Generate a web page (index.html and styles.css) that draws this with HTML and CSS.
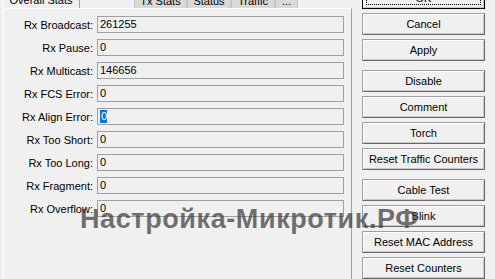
FILE: index.html
```html
<!DOCTYPE html>
<html>
<head>
<meta charset="utf-8">
<link rel="stylesheet" href="styles.css">
</head>
<body>
<div class="win">
  <div class="left">
    <div class="tabs">
      <div class="tab sel">Overall Stats</div>
      <div class="tab-gap"></div>
      <div class="tab w53">Tx Stats</div>
      <div class="tab w44">Status</div>
      <div class="tab w44">Traffic</div>
      <div class="tab w23">...</div>
    </div>
    <div class="panel">
      <div class="row"><span class="lbl">Rx Broadcast:</span><span class="fld">261255</span></div>
      <div class="row"><span class="lbl">Rx Pause:</span><span class="fld">0</span></div>
      <div class="row"><span class="lbl">Rx Multicast:</span><span class="fld">146656</span></div>
      <div class="row"><span class="lbl">Rx FCS Error:</span><span class="fld">0</span></div>
      <div class="row"><span class="lbl">Rx Align Error:</span><span class="fld"><span class="selected">0</span></span></div>
      <div class="row"><span class="lbl">Rx Too Short:</span><span class="fld">0</span></div>
      <div class="row"><span class="lbl">Rx Too Long:</span><span class="fld">0</span></div>
      <div class="row"><span class="lbl">Rx Fragment:</span><span class="fld">0</span></div>
      <div class="row"><span class="lbl">Rx Overflow:</span><span class="fld">0</span></div>
    </div>
  </div>
  <div class="btns">
    <div class="grp first">
      <button class="btn def"><span class="focus">OK</span></button>
      <button class="btn">Cancel</button>
      <button class="btn">Apply</button>
    </div>
    <div class="grp">
      <button class="btn">Disable</button>
      <button class="btn">Comment</button>
      <button class="btn">Torch</button>
      <button class="btn">Reset Traffic Counters</button>
    </div>
    <div class="grp">
      <button class="btn">Cable Test</button>
      <button class="btn">Blink</button>
      <button class="btn">Reset MAC Address</button>
      <button class="btn">Reset Counters</button>
    </div>
  </div>
</div>
<div class="wm">Настройка-Микротик.РФ</div>
</body>
</html>
```

FILE: styles.css
```css
html, body {
  margin: 0;
  padding: 0;
  background: #f0f0f0;
  overflow: hidden;
  width: 495px;
  height: 279px;
}
body {
  font-family: "Liberation Sans", Arial, sans-serif;
  font-size: 11px;
  color: #000;
  position: relative;
}
.win {
  display: flex;
  align-items: flex-start;
}
.left {
  width: 353px;
  flex: none;
}
.tabs {
  display: flex;
  align-items: flex-end;
  height: 8px;
  margin-left: 2px;
  overflow: hidden;
}
.tab {
  flex: none;
  height: 17px;
  box-sizing: border-box;
  padding-top: 3px;
  line-height: 13px;
  text-align: center;
  background: #d9d9d9;
  border: 1px solid #c4c4c4;
  border-bottom: none;
  white-space: nowrap;
}
.tab.sel {
  width: 78px;
  height: 18px;
  background: #f0f0f0;
  border-color: #ffffff #a0a0a0 #f0f0f0 #ffffff;
}
.tab-gap { width: 54px; flex: none; }
.w53 { width: 53px; }
.w44 { width: 44px; }
.w23 { width: 23px; }
.panel {
  margin-left: 3px;
  width: 349px;
  height: 280px;
  box-sizing: border-box;
  border-left: 1px solid #ffffff;
  border-top: 1px solid #ffffff;
  border-right: 1px solid #a0a0a0;
  padding-top: 7px;
  display: flex;
  flex-direction: column;
  gap: 6px;
}
.row {
  display: flex;
  align-items: center;
  gap: 4px;
  height: 17px;
}
.lbl {
  width: 89px;
  flex: none;
  text-align: right;
  white-space: nowrap;
}
.fld {
  width: 247px;
  height: 17px;
  box-sizing: border-box;
  border: 1px solid #a0a0a0;
  padding-left: 2px;
  line-height: 15px;
  white-space: nowrap;
}
.selected {
  display: inline-block;
  background: #0078d7;
  color: #fff;
  line-height: 13px;
  padding: 0 0 0 1px;
}
.btns {
  margin-left: 9px;
  width: 123px;
  margin-top: -13px;
  display: flex;
  flex-direction: column;
  gap: 9px;
}
.grp {
  display: flex;
  flex-direction: column;
  gap: 4px;
}
.btn {
  height: 22px;
  width: 123px;
  box-sizing: border-box;
  margin: 0;
  padding: 0;
  font-family: "Liberation Sans", Arial, sans-serif;
  font-size: 11px;
  color: #000;
  background: #f0f0f0;
  border: 1px solid;
  border-color: #a0a0a0 #696969 #696969 #a0a0a0;
  box-shadow: inset 1px 1px 0 #ffffff, inset -1px -1px 0 #c8c8c8;
  display: flex;
  align-items: center;
  justify-content: center;
}
.btn.def {
  border-color: #000;
  padding: 3px;
}
.focus {
  flex: 1;
  align-self: stretch;
  display: flex;
  align-items: center;
  justify-content: center;
  border: 1px dotted #000;
}
.wm {
  position: absolute;
  left: 80px;
  top: 206px;
  font-family: "Liberation Sans", Arial, sans-serif;
  font-weight: bold;
  font-size: 27px;
  line-height: 27px;
  letter-spacing: 0.6px;
  color: rgba(60, 60, 60, 0.72);
  white-space: nowrap;
}
```
